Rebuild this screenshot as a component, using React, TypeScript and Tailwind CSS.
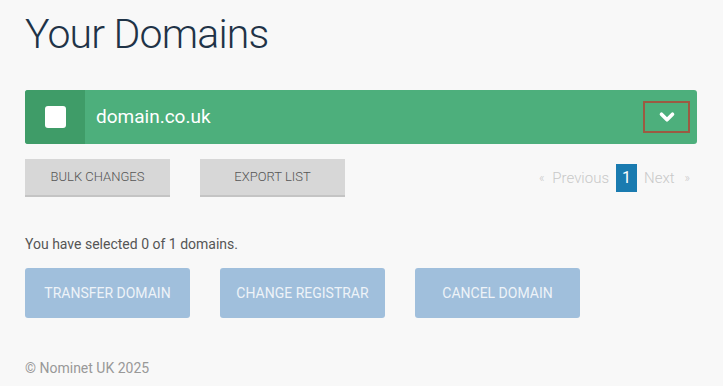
import { ChevronDown } from 'lucide-react';

function GrayButton({ label }: { label: string }) {
  return (
    <button
      type="button"
      className="h-[38px] w-[145px] border-b-2 border-[#c4c4c4] bg-[#d7d7d7] text-[13px] font-light uppercase text-[#555]"
    >
      {label}
    </button>
  );
}

function BlueButton({ label }: { label: string }) {
  return (
    <button
      type="button"
      className="h-[50px] w-[165px] rounded-[3px] bg-[#a0bfdc] text-[14px] uppercase text-[#eef3f8]"
    >
      {label}
    </button>
  );
}

export default function App() {
  return (
    <main className="min-h-[386px] w-[723px] bg-[#f8f8f8] px-[25px] pt-[8px] font-['Roboto',sans-serif]">
      <h1 className="text-[41px] font-light leading-[52px] tracking-[-0.02em] text-[#1f3347]">Your Domains</h1>

      <div className="mt-[30px] flex h-[54px] w-[672px] items-center overflow-hidden rounded-[3px] bg-[#4daf7c]">
        <div className="flex h-full w-[60px] items-center justify-center bg-[#3f9c68]">
          <span className="h-[22px] w-[21px] rounded-[3px] bg-white" />
        </div>
        <span className="ml-[11px] flex-1 text-[19px] text-white">domain.co.uk</span>
        <button
          type="button"
          className="mr-[7px] flex h-[32px] w-[47px] items-center justify-center border-2 border-[#9c5a42]"
        >
          <ChevronDown className="h-[22px] w-[22px] text-white" strokeWidth={4} />
        </button>
      </div>

      <div className="mt-[15px] flex w-[672px] items-center">
        <div className="flex gap-[30px]">
          <GrayButton label="Bulk changes" />
          <GrayButton label="Export list" />
        </div>
        <div className="ml-auto mr-[7px] flex items-center text-[15px] font-light text-[#c8c8c8]">
          <span className="mr-[8px] text-[12px]">«</span>
          <span>Previous</span>
          <span className="mx-[7px] flex h-[28px] w-[21px] items-center justify-center bg-[#1a7bb0] text-[16px] font-normal text-white">1</span>
          <span>Next</span>
          <span className="ml-[10px] text-[12px]">»</span>
        </div>
      </div>

      <p className="mt-[37px] text-[14px] text-[#555]">You have selected 0 of 1 domains.</p>

      <div className="mt-[13px] flex gap-[30px]">
        <BlueButton label="Transfer domain" />
        <BlueButton label="Change registrar" />
        <BlueButton label="Cancel domain" />
      </div>

      <p className="mt-[40px] text-[14px] text-[#999]">© Nominet UK 2025</p>
    </main>
  );
}
